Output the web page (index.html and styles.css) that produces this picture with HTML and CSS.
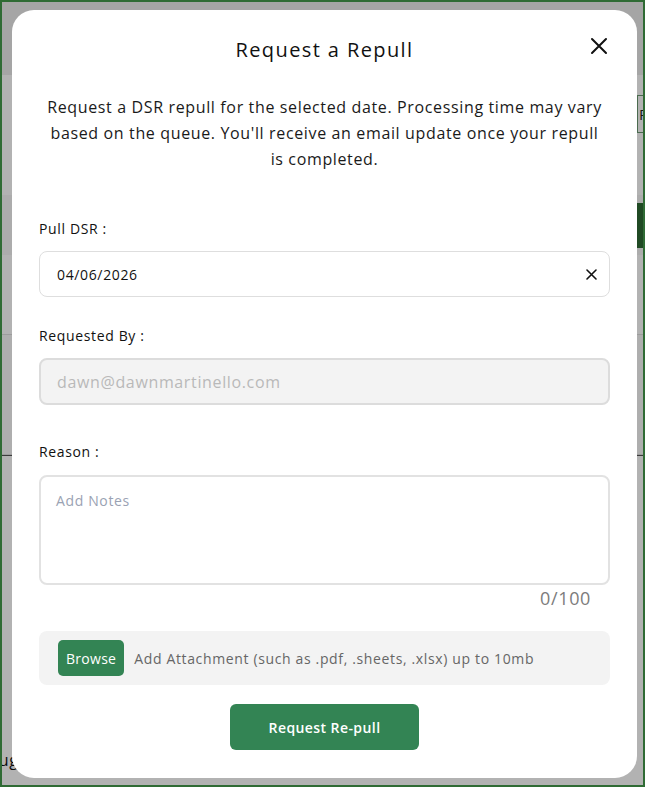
FILE: index.html
```html
<!DOCTYPE html>
<html lang="en">
<head>
  <meta charset="UTF-8">
  <title>Request a Repull</title>
  <meta name="viewport" content="width=device-width, initial-scale=1.0">
  <link rel="stylesheet" href="styles.css">
</head>
<body>
  <div class="page">
    <div class="app">
      <div class="app-header"></div>
      <div class="app-toolbar">
        <span class="toolbar-btn">Re</span>
      </div>
      <div class="app-filter">
        <span class="filter-btn">&lt;</span>
      </div>
      <div class="app-row"></div>
      <div class="app-row alt"></div>
      <div class="app-table"></div>
      <div class="app-footer">Aug</div>
    </div>

    <div class="overlay">
      <div class="modal">
        <div class="modal-head">
          <h2>Request a Repull</h2>
          <button class="close-btn" aria-label="Close">
            <svg width="18" height="18" viewBox="0 0 18 18"><path d="M2 2 L16 16 M16 2 L2 16" stroke="#111" stroke-width="2" stroke-linecap="round"/></svg>
          </button>
        </div>
        <p class="intro">Request a DSR repull for the selected date. Processing time may vary based on the queue. You'll receive an email update once your repull is completed.</p>

        <div class="field first">
          <label>Pull DSR :</label>
          <div class="input date-input">
            <span>04/06/2026</span>
            <svg width="11" height="11" viewBox="0 0 11 11"><path d="M1 1 L10 10 M10 1 L1 10" stroke="#111" stroke-width="1.6" stroke-linecap="round"/></svg>
          </div>
        </div>

        <div class="field">
          <label>Requested By :</label>
          <div class="input disabled">dawn@dawnmartinello.com</div>
        </div>

        <div class="field reason">
          <label>Reason :</label>
          <div class="textarea">Add Notes</div>
          <div class="counter">0/100</div>
        </div>

        <div class="attach">
          <button class="browse-btn">Browse</button>
          <span>Add Attachment (such as .pdf, .sheets, .xlsx) up to 10mb</span>
        </div>

        <div class="actions">
          <button class="submit-btn">Request Re-pull</button>
        </div>
      </div>
    </div>
  </div>
</body>
</html>
```

FILE: styles.css
```css
* {
  box-sizing: border-box;
}
body {
  margin: 0;
  padding: 0;
  font-family: 'Open Sans', 'DejaVu Sans', sans-serif;
  letter-spacing: 0.04em;
  background: #fff;
}
.page {
  position: relative;
  height: 787px;
  border: 2px solid #2f6b34;
  overflow: hidden;
}

/* page behind the dialog */
.app {
  height: 100%;
  background: #fff;
}
.app-header {
  height: 73px;
  background: #ededed;
}
.app-toolbar {
  height: 120px;
  display: flex;
  justify-content: flex-end;
  padding-top: 20px;
}
.toolbar-btn {
  height: 38px;
  width: 40px;
  margin-right: -34px;
  border: 1px solid #6a9a72;
  font-size: 15px;
  line-height: 36px;
  padding-left: 1px;
  color: #222;
}
.app-filter {
  height: 60px;
  display: flex;
  justify-content: flex-end;
  padding-top: 8px;
  background: #f6f6f6;
}
.filter-btn {
  width: 40px;
  height: 45px;
  background: #2f6b34;
  color: #eee;
  font-size: 16px;
  line-height: 45px;
  padding-left: 4px;
}
.app-row {
  height: 80px;
  border-bottom: 1px solid #e0e0e0;
}
.app-row.alt {
  height: 120px;
  background: #fafafa;
}
.app-table {
  height: 294px;
  border-top: 1px solid #555;
}
.app-footer {
  font-size: 16px;
  margin-left: -14px;
  color: #111;
}

.overlay {
  position: absolute;
  inset: 0;
  background: rgba(0, 0, 0, 0.3);
  padding: 8px 6px 7px 10px;
}
.modal {
  height: 100%;
  background: #fff;
  border-radius: 22px;
  padding: 20px 27px 0 27px;
  color: #111;
}
.modal-head {
  position: relative;
  text-align: center;
  padding-top: 6px;
}
.modal-head h2 {
  margin: 0;
  font-size: 20px;
  font-weight: 500;
  line-height: 28px;
  letter-spacing: 0.07em;
}
.close-btn {
  position: absolute;
  right: 2px;
  top: 7px;
  background: none;
  border: none;
  padding: 0;
  cursor: pointer;
}
.intro {
  margin: 30px 0 0;
  padding: 0 4px;
  text-align: center;
  font-size: 16px;
  line-height: 26px;
  color: #1a1a1a;
}
.field {
  margin-top: 29px;
}
.field.first {
  margin-top: 47px;
}
.field.reason {
  margin-top: 37px;
}
.field label {
  display: block;
  font-size: 14px;
  font-weight: 500;
  line-height: 20px;
  margin-bottom: 12px;
}
.reason label {
  margin-bottom: 13px;
}
.input {
  height: 46px;
  border: 1px solid #dedede;
  border-radius: 8px;
  padding: 0 17px;
  display: flex;
  align-items: center;
  font-size: 14px;
}
.date-input {
  justify-content: space-between;
  padding-right: 12px;
}
.input.disabled {
  height: 47px;
  background: #f3f3f3;
  border: 2px solid #dcdcdc;
  color: #b9b9b9;
  font-size: 16px;
  padding-left: 16px;
}
.textarea {
  height: 110px;
  border: 2px solid #e2e2e2;
  border-radius: 8px;
  padding: 14px 15px;
  font-size: 14px;
  color: #9aa2b3;
}
.counter {
  text-align: right;
  font-size: 18px;
  color: #7c7c7c;
  padding-right: 19px;
  margin-top: 1px;
  line-height: 24px;
}
.attach {
  margin-top: 21px;
  height: 54px;
  background: #f3f3f3;
  border-radius: 8px;
  display: flex;
  align-items: center;
  gap: 10px;
  padding-left: 19px;
  font-size: 14px;
  color: #666;
}
.browse-btn {
  height: 36px;
  padding: 0 8px;
  border: none;
  border-radius: 5px;
  background: #338454;
  color: #fff;
  font-family: inherit;
  letter-spacing: 0.02em;
  font-size: 14px;
  font-weight: 500;
}
.actions {
  display: flex;
  justify-content: center;
  margin-top: 19px;
}
.submit-btn {
  width: 189px;
  height: 46px;
  border: none;
  border-radius: 6px;
  background: #338454;
  color: #fff;
  font-family: inherit;
  letter-spacing: 0.03em;
  font-size: 14px;
  font-weight: 600;
  cursor: pointer;
}
```
